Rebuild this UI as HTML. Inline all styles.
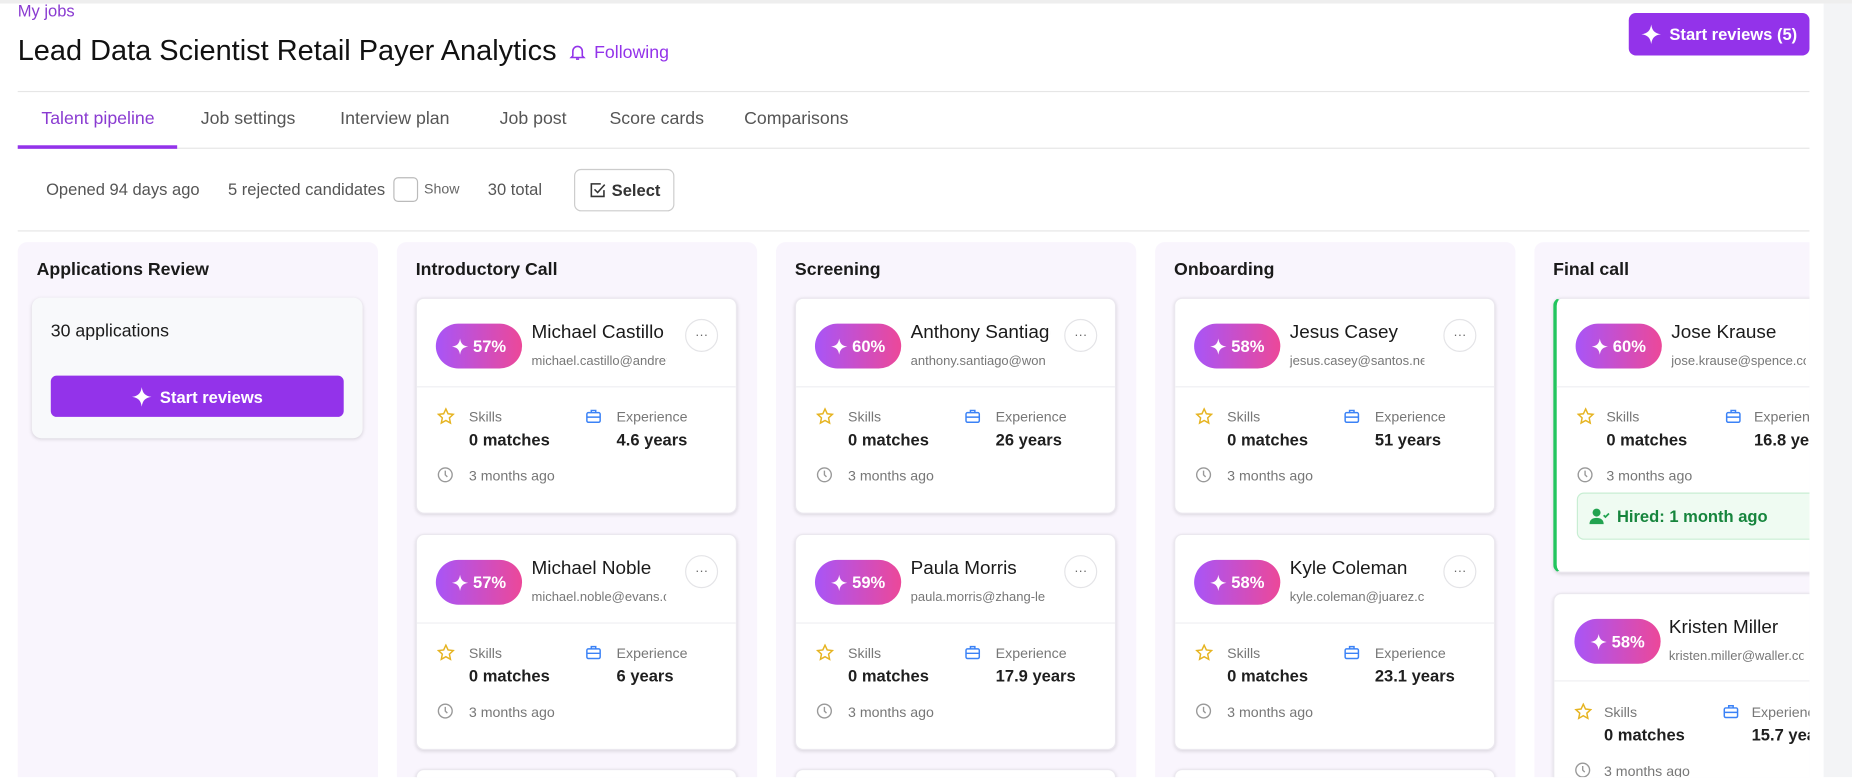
<!DOCTYPE html>
<html><head><meta charset="utf-8">
<style>
*{box-sizing:border-box;margin:0;padding:0}
html,body{width:1852px;height:778px;overflow:hidden;background:#fff;font-family:"Liberation Sans",sans-serif}
#w{position:absolute;left:0;top:0;width:1568px;height:658px;transform:scale(1.18112);transform-origin:0 0;overflow:hidden}
.a{position:absolute;white-space:nowrap}
.col{position:absolute;top:205px;width:305px;height:470px;background:#f9f5fd;border-radius:8px}
.col h3{position:absolute;left:16px;top:15px;font-size:15px;font-weight:600;color:#1a1a1a}
.card{position:absolute;left:16px;width:272px;height:183px;background:#fff;border:1px solid #ebe8ef;border-radius:7px;box-shadow:0 1px 3px rgba(0,0,0,.12);overflow:hidden}
.badge{position:absolute;left:16px;top:21px;width:73px;height:38px;border-radius:19px;background:linear-gradient(90deg,#a855f7,#ec4899);color:#fff;font-weight:bold;font-size:14px;display:flex;align-items:center;justify-content:center;gap:3px}
.nm{position:absolute;left:97px;top:20px;font-size:16px;color:#1a1a1a;width:136px;overflow:hidden;white-space:nowrap}
.em{position:absolute;left:97px;top:47px;font-size:11px;color:#777;width:114px;overflow:hidden;white-space:nowrap}
.dots{position:absolute;left:227px;top:17px;width:28px;height:28px;border:1px solid #e4e4e7;border-radius:50%;font-size:11px;color:#666;text-align:center;line-height:26px}
.dv{position:absolute;left:0;right:0;top:74px;border-top:1px solid #efeff2}
.lb{position:absolute;font-size:12px;color:#777}
.vl{position:absolute;font-size:14px;font-weight:bold;color:#1f1f1f}
.ic{position:absolute}
.tab{position:absolute;top:92px;font-size:15px;color:#555}
</style></head><body><div id="w">
<div class="a" style="left:0;right:0;top:0;height:3px;background:#eee"></div>
<div class="a" style="left:1544px;top:3px;width:24px;height:656px;background:#f3f4f6"></div>
<div class="a" style="left:15px;top:1px;font-size:14px;color:#8a3bd1">My jobs</div>
<div class="a" style="left:15px;top:30px;font-size:24.5px;color:#111">Lead Data Scientist Retail Payer Analytics</div>
<svg class="a" style="left:481px;top:35px" width="16" height="18" viewBox="0 0 24 24" fill="none" stroke="#9333ea" stroke-width="2"><path d="M6 17V11a6 6 0 0 1 12 0v6l2 2H4z"/><path d="M10 21h4"/></svg>
<div class="a" style="left:503px;top:36px;font-size:15px;color:#9333ea">Following</div>
<div class="a" style="left:1379px;top:11px;width:153px;height:36px;background:#9333ea;border-radius:6px;color:#fff;font-weight:bold;font-size:14px;display:flex;align-items:center;justify-content:center;gap:6px"><svg width="18" height="18" viewBox="0 0 24 24"><path d="M12 1C13 8 16 11 23 12C16 13 13 16 12 23C11 16 8 13 1 12C8 11 11 8 12 1Z" fill="#fff"/></svg>Start reviews (5)</div>
<div class="a" style="left:15px;width:1517px;top:77px;border-top:1px solid #e6e6e6"></div>
<div class="tab" style="left:35px;color:#8a3bd1">Talent pipeline</div>
<div class="tab" style="left:170px">Job settings</div>
<div class="tab" style="left:288px">Interview plan</div>
<div class="tab" style="left:423px">Job post</div>
<div class="tab" style="left:516px">Score cards</div>
<div class="tab" style="left:630px">Comparisons</div>
<div class="a" style="left:15px;width:1517px;top:125px;border-top:1px solid #e6e6e6"></div>
<div class="a" style="left:15px;width:135px;top:123px;height:3px;background:#9333ea"></div>
<div class="a" style="left:39px;top:152px;font-size:14px;color:#555">Opened 94 days ago</div>
<div class="a" style="left:193px;top:152px;font-size:14px;color:#555">5 rejected candidates</div>
<div class="a" style="left:333px;top:150px;width:21px;height:21px;border:1px solid #bbb;border-radius:4px"></div>
<div class="a" style="left:359px;top:153px;font-size:12px;color:#666">Show</div>
<div class="a" style="left:413px;top:152px;font-size:14px;color:#555">30 total</div>
<div class="a" style="left:486px;top:143px;width:85px;height:36px;border:1px solid #ccc;border-radius:6px;font-size:14px;font-weight:bold;color:#333;display:flex;align-items:center;justify-content:center;gap:4px"><svg width="16" height="16" viewBox="0 0 24 24" fill="none" stroke="#333" stroke-width="2"><path d="M20 12v8H4V4h12"/><path d="M8 11l4 4 9-10"/></svg>Select</div>
<div class="a" style="left:15px;width:1517px;top:195px;border-top:1px solid #e6e6e6"></div>

<div class="col" style="left:15px"><h3>Applications Review</h3>
<div class="a" style="left:12px;top:47px;width:280px;height:119px;background:#f8f9fb;border-radius:8px;box-shadow:0 1px 3px rgba(0,0,0,.13)">
<div class="a" style="left:16px;top:20px;font-size:15px;color:#1a1a1a">30 applications</div>
<div class="a" style="left:16px;top:66px;width:248px;height:35px;background:#9333ea;border-radius:5px;color:#fff;font-weight:bold;font-size:14px;display:flex;align-items:center;justify-content:center;gap:6px"><svg width="18" height="18" viewBox="0 0 24 24"><path d="M12 1C13 8 16 11 23 12C16 13 13 16 12 23C11 16 8 13 1 12C8 11 11 8 12 1Z" fill="#fff"/></svg>Start reviews</div>
</div></div>

<div class="col" style="left:336px"><h3>Introductory Call</h3>
<div class="card" style="top:47px"><div class="badge"><svg width="15" height="15" viewBox="0 0 24 24"><path d="M12 1C13 8 16 11 23 12C16 13 13 16 12 23C11 16 8 13 1 12C8 11 11 8 12 1Z" fill="#fff"/></svg>57%</div><div class="nm">Michael Castillo</div><div class="em">michael.castillo@andrews.com</div><div class="dots">···</div><div class="dv"></div>
<svg class="ic" style="left:17px;top:92px" width="15" height="15" viewBox="0 0 24 24" fill="none" stroke="#e6b422" stroke-width="2"><path d="M12 2l3 6.5 7 .8-5.2 4.8 1.4 7L12 17.6 5.8 21.1l1.4-7L2 9.3l7-.8z"/></svg><div class="lb" style="left:44px;top:93px">Skills</div><div class="vl" style="left:44px;top:111px">0 matches</div>
<svg class="ic" style="left:142px;top:92px" width="15" height="15" viewBox="0 0 24 24" fill="none" stroke="#3b82f6" stroke-width="2"><rect x="3" y="7" width="18" height="13" rx="2"/><path d="M9 7V4h6v3M3 13h18"/></svg><div class="lb" style="left:169px;top:93px">Experience</div><div class="vl" style="left:169px;top:111px">4.6 years</div>
<svg class="ic" style="left:17px;top:142px" width="14" height="14" viewBox="0 0 24 24" fill="none" stroke="#999" stroke-width="2"><circle cx="12" cy="12" r="10"/><path d="M12 6v6l3 3"/></svg><div class="lb" style="left:44px;top:143px">3 months ago</div></div>
<div class="card" style="top:247px"><div class="badge"><svg width="15" height="15" viewBox="0 0 24 24"><path d="M12 1C13 8 16 11 23 12C16 13 13 16 12 23C11 16 8 13 1 12C8 11 11 8 12 1Z" fill="#fff"/></svg>57%</div><div class="nm">Michael Noble</div><div class="em">michael.noble@evans.com</div><div class="dots">···</div><div class="dv"></div>
<svg class="ic" style="left:17px;top:92px" width="15" height="15" viewBox="0 0 24 24" fill="none" stroke="#e6b422" stroke-width="2"><path d="M12 2l3 6.5 7 .8-5.2 4.8 1.4 7L12 17.6 5.8 21.1l1.4-7L2 9.3l7-.8z"/></svg><div class="lb" style="left:44px;top:93px">Skills</div><div class="vl" style="left:44px;top:111px">0 matches</div>
<svg class="ic" style="left:142px;top:92px" width="15" height="15" viewBox="0 0 24 24" fill="none" stroke="#3b82f6" stroke-width="2"><rect x="3" y="7" width="18" height="13" rx="2"/><path d="M9 7V4h6v3M3 13h18"/></svg><div class="lb" style="left:169px;top:93px">Experience</div><div class="vl" style="left:169px;top:111px">6 years</div>
<svg class="ic" style="left:17px;top:142px" width="14" height="14" viewBox="0 0 24 24" fill="none" stroke="#999" stroke-width="2"><circle cx="12" cy="12" r="10"/><path d="M12 6v6l3 3"/></svg><div class="lb" style="left:44px;top:143px">3 months ago</div></div>
<div class="card" style="top:446px"></div></div>

<div class="col" style="left:657px"><h3>Screening</h3>
<div class="card" style="top:47px"><div class="badge"><svg width="15" height="15" viewBox="0 0 24 24"><path d="M12 1C13 8 16 11 23 12C16 13 13 16 12 23C11 16 8 13 1 12C8 11 11 8 12 1Z" fill="#fff"/></svg>60%</div><div class="nm" style="width:118px">Anthony Santiago</div><div class="em">anthony.santiago@wong.com</div><div class="dots">···</div><div class="dv"></div>
<svg class="ic" style="left:17px;top:92px" width="15" height="15" viewBox="0 0 24 24" fill="none" stroke="#e6b422" stroke-width="2"><path d="M12 2l3 6.5 7 .8-5.2 4.8 1.4 7L12 17.6 5.8 21.1l1.4-7L2 9.3l7-.8z"/></svg><div class="lb" style="left:44px;top:93px">Skills</div><div class="vl" style="left:44px;top:111px">0 matches</div>
<svg class="ic" style="left:142px;top:92px" width="15" height="15" viewBox="0 0 24 24" fill="none" stroke="#3b82f6" stroke-width="2"><rect x="3" y="7" width="18" height="13" rx="2"/><path d="M9 7V4h6v3M3 13h18"/></svg><div class="lb" style="left:169px;top:93px">Experience</div><div class="vl" style="left:169px;top:111px">26 years</div>
<svg class="ic" style="left:17px;top:142px" width="14" height="14" viewBox="0 0 24 24" fill="none" stroke="#999" stroke-width="2"><circle cx="12" cy="12" r="10"/><path d="M12 6v6l3 3"/></svg><div class="lb" style="left:44px;top:143px">3 months ago</div></div>
<div class="card" style="top:247px"><div class="badge"><svg width="15" height="15" viewBox="0 0 24 24"><path d="M12 1C13 8 16 11 23 12C16 13 13 16 12 23C11 16 8 13 1 12C8 11 11 8 12 1Z" fill="#fff"/></svg>59%</div><div class="nm">Paula Morris</div><div class="em">paula.morris@zhang-lee.com</div><div class="dots">···</div><div class="dv"></div>
<svg class="ic" style="left:17px;top:92px" width="15" height="15" viewBox="0 0 24 24" fill="none" stroke="#e6b422" stroke-width="2"><path d="M12 2l3 6.5 7 .8-5.2 4.8 1.4 7L12 17.6 5.8 21.1l1.4-7L2 9.3l7-.8z"/></svg><div class="lb" style="left:44px;top:93px">Skills</div><div class="vl" style="left:44px;top:111px">0 matches</div>
<svg class="ic" style="left:142px;top:92px" width="15" height="15" viewBox="0 0 24 24" fill="none" stroke="#3b82f6" stroke-width="2"><rect x="3" y="7" width="18" height="13" rx="2"/><path d="M9 7V4h6v3M3 13h18"/></svg><div class="lb" style="left:169px;top:93px">Experience</div><div class="vl" style="left:169px;top:111px">17.9 years</div>
<svg class="ic" style="left:17px;top:142px" width="14" height="14" viewBox="0 0 24 24" fill="none" stroke="#999" stroke-width="2"><circle cx="12" cy="12" r="10"/><path d="M12 6v6l3 3"/></svg><div class="lb" style="left:44px;top:143px">3 months ago</div></div>
<div class="card" style="top:446px"></div></div>

<div class="col" style="left:978px"><h3>Onboarding</h3>
<div class="card" style="top:47px"><div class="badge"><svg width="15" height="15" viewBox="0 0 24 24"><path d="M12 1C13 8 16 11 23 12C16 13 13 16 12 23C11 16 8 13 1 12C8 11 11 8 12 1Z" fill="#fff"/></svg>58%</div><div class="nm">Jesus Casey</div><div class="em">jesus.casey@santos.net</div><div class="dots">···</div><div class="dv"></div>
<svg class="ic" style="left:17px;top:92px" width="15" height="15" viewBox="0 0 24 24" fill="none" stroke="#e6b422" stroke-width="2"><path d="M12 2l3 6.5 7 .8-5.2 4.8 1.4 7L12 17.6 5.8 21.1l1.4-7L2 9.3l7-.8z"/></svg><div class="lb" style="left:44px;top:93px">Skills</div><div class="vl" style="left:44px;top:111px">0 matches</div>
<svg class="ic" style="left:142px;top:92px" width="15" height="15" viewBox="0 0 24 24" fill="none" stroke="#3b82f6" stroke-width="2"><rect x="3" y="7" width="18" height="13" rx="2"/><path d="M9 7V4h6v3M3 13h18"/></svg><div class="lb" style="left:169px;top:93px">Experience</div><div class="vl" style="left:169px;top:111px">51 years</div>
<svg class="ic" style="left:17px;top:142px" width="14" height="14" viewBox="0 0 24 24" fill="none" stroke="#999" stroke-width="2"><circle cx="12" cy="12" r="10"/><path d="M12 6v6l3 3"/></svg><div class="lb" style="left:44px;top:143px">3 months ago</div></div>
<div class="card" style="top:247px"><div class="badge"><svg width="15" height="15" viewBox="0 0 24 24"><path d="M12 1C13 8 16 11 23 12C16 13 13 16 12 23C11 16 8 13 1 12C8 11 11 8 12 1Z" fill="#fff"/></svg>58%</div><div class="nm">Kyle Coleman</div><div class="em">kyle.coleman@juarez.com</div><div class="dots">···</div><div class="dv"></div>
<svg class="ic" style="left:17px;top:92px" width="15" height="15" viewBox="0 0 24 24" fill="none" stroke="#e6b422" stroke-width="2"><path d="M12 2l3 6.5 7 .8-5.2 4.8 1.4 7L12 17.6 5.8 21.1l1.4-7L2 9.3l7-.8z"/></svg><div class="lb" style="left:44px;top:93px">Skills</div><div class="vl" style="left:44px;top:111px">0 matches</div>
<svg class="ic" style="left:142px;top:92px" width="15" height="15" viewBox="0 0 24 24" fill="none" stroke="#3b82f6" stroke-width="2"><rect x="3" y="7" width="18" height="13" rx="2"/><path d="M9 7V4h6v3M3 13h18"/></svg><div class="lb" style="left:169px;top:93px">Experience</div><div class="vl" style="left:169px;top:111px">23.1 years</div>
<svg class="ic" style="left:17px;top:142px" width="14" height="14" viewBox="0 0 24 24" fill="none" stroke="#999" stroke-width="2"><circle cx="12" cy="12" r="10"/><path d="M12 6v6l3 3"/></svg><div class="lb" style="left:44px;top:143px">3 months ago</div></div>
<div class="card" style="top:446px"></div></div>

<div class="a" style="left:1299px;top:205px;width:233px;height:470px;overflow:hidden">
<div class="col" style="left:0;top:0"><h3>Final call</h3>
<div class="card" style="top:47px;height:233px;border-left:3px solid #22c55e"><div class="badge"><svg width="15" height="15" viewBox="0 0 24 24"><path d="M12 1C13 8 16 11 23 12C16 13 13 16 12 23C11 16 8 13 1 12C8 11 11 8 12 1Z" fill="#fff"/></svg>60%</div><div class="nm">Jose Krause</div><div class="em">jose.krause@spence.com</div><div class="dv"></div>
<svg class="ic" style="left:17px;top:92px" width="15" height="15" viewBox="0 0 24 24" fill="none" stroke="#e6b422" stroke-width="2"><path d="M12 2l3 6.5 7 .8-5.2 4.8 1.4 7L12 17.6 5.8 21.1l1.4-7L2 9.3l7-.8z"/></svg><div class="lb" style="left:42px;top:93px">Skills</div><div class="vl" style="left:42px;top:111px">0 matches</div>
<svg class="ic" style="left:142px;top:92px" width="15" height="15" viewBox="0 0 24 24" fill="none" stroke="#3b82f6" stroke-width="2"><rect x="3" y="7" width="18" height="13" rx="2"/><path d="M9 7V4h6v3M3 13h18"/></svg><div class="lb" style="left:167px;top:93px">Experience</div><div class="vl" style="left:167px;top:111px">16.8 years</div>
<svg class="ic" style="left:17px;top:142px" width="14" height="14" viewBox="0 0 24 24" fill="none" stroke="#999" stroke-width="2"><circle cx="12" cy="12" r="10"/><path d="M12 6v6l3 3"/></svg><div class="lb" style="left:42px;top:143px">3 months ago</div>
<div class="a" style="left:17px;top:164px;width:260px;height:40px;background:#effbf2;border:1px solid #c8eed3;border-radius:6px"><svg class="ic" style="left:9px;top:11px" width="18" height="16" viewBox="0 0 24 20"><circle cx="9" cy="6" r="4.5" fill="#22a350"/><path d="M1 19c0-5 3.5-7 8-7s8 2 8 7z" fill="#22a350"/><path d="M17 9l2 2 4-4" stroke="#22a350" stroke-width="2" fill="none"/></svg><div class="a" style="left:33px;top:11px;font-size:14px;font-weight:bold;color:#16853d">Hired: 1 month ago</div></div></div>
<div class="card" style="top:297px"><div class="badge" style="left:17px"><svg width="15" height="15" viewBox="0 0 24 24"><path d="M12 1C13 8 16 11 23 12C16 13 13 16 12 23C11 16 8 13 1 12C8 11 11 8 12 1Z" fill="#fff"/></svg>58%</div><div class="nm">Kristen Miller</div><div class="em">kristen.miller@waller.com</div><div class="dv" style="top:73px"></div>
<svg class="ic" style="left:17px;top:92px" width="15" height="15" viewBox="0 0 24 24" fill="none" stroke="#e6b422" stroke-width="2"><path d="M12 2l3 6.5 7 .8-5.2 4.8 1.4 7L12 17.6 5.8 21.1l1.4-7L2 9.3l7-.8z"/></svg><div class="lb" style="left:42px;top:93px">Skills</div><div class="vl" style="left:42px;top:111px">0 matches</div>
<svg class="ic" style="left:142px;top:92px" width="15" height="15" viewBox="0 0 24 24" fill="none" stroke="#3b82f6" stroke-width="2"><rect x="3" y="7" width="18" height="13" rx="2"/><path d="M9 7V4h6v3M3 13h18"/></svg><div class="lb" style="left:167px;top:93px">Experience</div><div class="vl" style="left:167px;top:111px">15.7 years</div>
<svg class="ic" style="left:17px;top:142px" width="14" height="14" viewBox="0 0 24 24" fill="none" stroke="#999" stroke-width="2"><circle cx="12" cy="12" r="10"/><path d="M12 6v6l3 3"/></svg><div class="lb" style="left:42px;top:143px">3 months ago</div></div>
</div></div>
</div></body></html>
